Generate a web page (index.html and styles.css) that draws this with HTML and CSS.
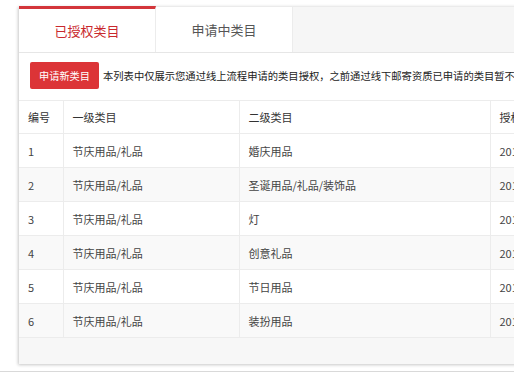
FILE: index.html
```html
<!DOCTYPE html>
<html lang="zh-CN">
<head>
<meta charset="utf-8">
<title>类目管理</title>
<link rel="stylesheet" href="styles.css">
</head>
<body>
<div class="page">
  <div class="panel">
    <div class="tabs">
      <div class="tab active">已授权类目</div>
      <div class="tab">申请中类目</div>
      <div class="tab-fill"></div>
    </div>
    <div class="toolbar">
      <button class="btn-apply">申请新类目</button>
      <span class="notice">本列表中仅展示您通过线上流程申请的类目授权，之前通过线下邮寄资质已申请的类目暂不在此展示</span>
    </div>
    <table class="grid">
      <colgroup>
        <col class="c-no">
        <col class="c-l1">
        <col class="c-l2">
        <col class="c-date">
      </colgroup>
      <thead>
        <tr><th>编号</th><th>一级类目</th><th>二级类目</th><th>授权时间</th></tr>
      </thead>
      <tbody>
        <tr><td>1</td><td>节庆用品/礼品</td><td>婚庆用品</td><td>2016-08-12</td></tr>
        <tr><td>2</td><td>节庆用品/礼品</td><td>圣诞用品/礼品/装饰品</td><td>2016-08-12</td></tr>
        <tr><td>3</td><td>节庆用品/礼品</td><td>灯</td><td>2016-08-12</td></tr>
        <tr><td>4</td><td>节庆用品/礼品</td><td>创意礼品</td><td>2016-08-12</td></tr>
        <tr><td>5</td><td>节庆用品/礼品</td><td>节日用品</td><td>2016-08-12</td></tr>
        <tr><td>6</td><td>节庆用品/礼品</td><td>装扮用品</td><td>2016-08-12</td></tr>
      </tbody>
    </table>
    <div class="panel-foot"></div>
  </div>
  <div class="bottom-rule"></div>
</div>
</body>
</html>
```

FILE: styles.css
```css
html, body {
  margin: 0;
  padding: 0;
  background: #ffffff;
  overflow: hidden;
  font-family: "Noto Sans CJK SC", "Noto Sans", "Liberation Sans", sans-serif;
  color: #333333;
}

.page {
  width: 514px;
  height: 376px;
  padding-top: 6px;
  box-sizing: border-box;
  overflow: hidden;
}

.panel {
  margin-left: 19px;
  width: 760px;
  background: #ffffff;
  box-shadow: -1px 1px 3px rgba(0, 0, 0, 0.22);
}

.tabs {
  display: flex;
  height: 47px;
  box-sizing: border-box;
  border-top: 1px solid #ebebeb;
  border-bottom: 1px solid #e6e6e6;
  background: #f6f6f6;
}

.tab {
  width: 137px;
  display: flex;
  align-items: center;
  justify-content: center;
  background: #ffffff;
  font-size: 13px;
  color: #555555;
  border-right: 1px solid #ececec;
  box-sizing: border-box;
}

.tab.active {
  color: #c9282d;
  border-top: 3px solid #d3353a;
  margin-top: -1px;
  padding-bottom: 1px;
}

.tab-fill {
  flex: 1;
}

.toolbar {
  height: 47px;
  box-sizing: border-box;
  display: flex;
  align-items: center;
  padding: 0 0 2px 11px;
  gap: 4px;
  white-space: nowrap;
}

.btn-apply {
  flex: none;
  height: 27px;
  width: 69px;
  padding: 0;
  border: none;
  border-radius: 2px;
  background: #dc3437;
  color: #ffffff;
  font-family: inherit;
  font-size: 10.2px;
}

.notice {
  font-size: 10.3px;
  color: #222222;
}

.grid {
  width: 760px;
  border-collapse: collapse;
  table-layout: fixed;
  font-size: 11px;
  color: #444444;
}

.grid th,
.grid td {
  text-align: left;
  font-weight: normal;
  padding: 0 0 0 9px;
  border-top: 1px solid #ececec;
  border-left: 1px solid #ececec;
  white-space: nowrap;
  overflow: hidden;
}

.grid th:first-child,
.grid td:first-child {
  border-left: none;
}

.grid th {
  height: 32px;
  color: #333333;
}

.grid td {
  height: 33px;
}

.grid tbody tr:nth-child(even) td {
  background: #f9f9f9;
}

.c-no { width: 44px; }
.c-l1 { width: 176px; }
.c-l2 { width: 251px; }
.c-date { width: 289px; }

.panel-foot {
  height: 26px;
  background: #f7f7f7;
  border-top: 1px solid #ececec;
}

.bottom-rule {
  margin-top: 7px;
  border-top: 1px solid #d9d9d9;
}
```
